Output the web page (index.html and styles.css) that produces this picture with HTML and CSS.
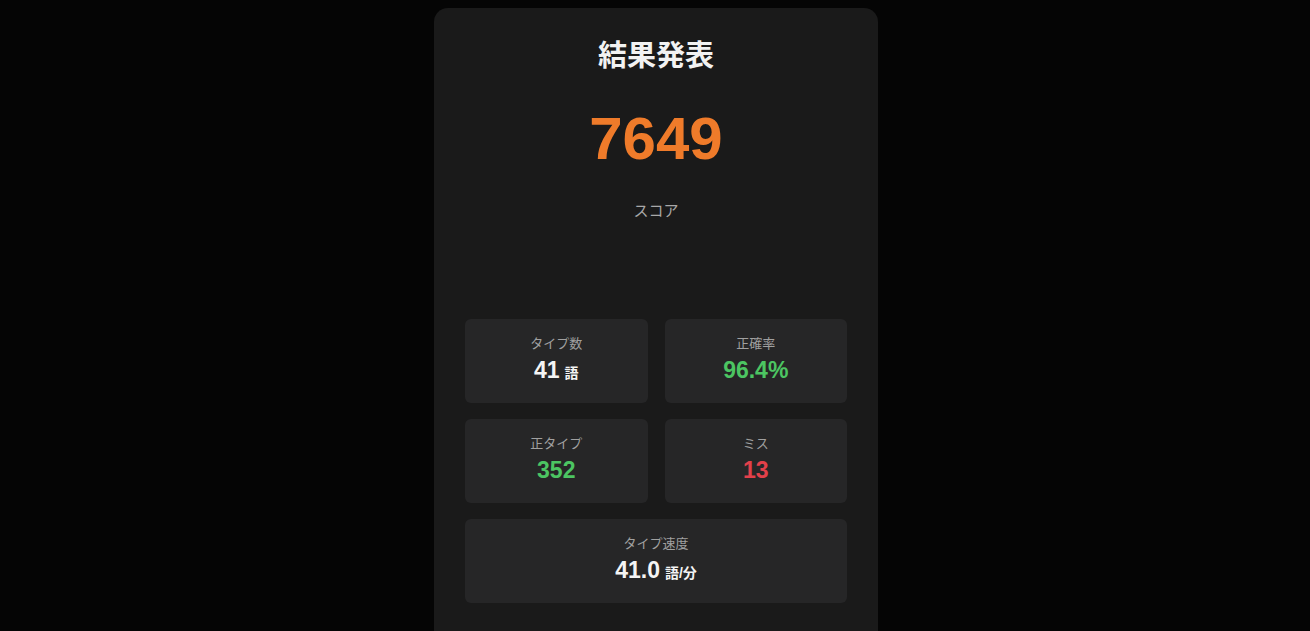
FILE: index.html
```html
<!DOCTYPE html>
<html lang="ja">
<head>
<meta charset="utf-8">
<title>結果発表</title>
<link rel="stylesheet" href="styles.css">
</head>
<body>
<main class="card">
  <h1 class="title">結果発表</h1>
  <div class="score">7649</div>
  <div class="score-label">スコア</div>
  <div class="stats">
    <div class="stat">
      <div class="stat-label">タイプ数</div>
      <div class="stat-value">41<span class="unit">語</span></div>
    </div>
    <div class="stat">
      <div class="stat-label">正確率</div>
      <div class="stat-value green">96.4%</div>
    </div>
    <div class="stat">
      <div class="stat-label">正タイプ</div>
      <div class="stat-value green">352</div>
    </div>
    <div class="stat">
      <div class="stat-label">ミス</div>
      <div class="stat-value red">13</div>
    </div>
    <div class="stat wide">
      <div class="stat-label">タイプ速度</div>
      <div class="stat-value">41.0<span class="unit">語/分</span></div>
    </div>
  </div>
</main>
</body>
</html>
```

FILE: styles.css
```css
html, body {
  margin: 0;
  padding: 0;
  height: 100%;
  background: #050505;
  overflow: hidden;
}
body {
  font-family: "Liberation Sans", Arial, "Noto Sans CJK JP", sans-serif;
  color: #f0f0f0;
  padding-top: 8px;
  box-sizing: border-box;
}
.card {
  width: 444px;
  height: 100%;
  box-sizing: border-box;
  margin: 0 0 0 calc(50% - 221px);
  padding: 28px 31px 0;
  background: #1a1a1a;
  border-radius: 14px 14px 0 0;
  text-align: center;
}
.title {
  margin: 0;
  font-size: 29px;
  line-height: 40px;
  font-weight: 700;
  color: #f2f2f2;
  font-family: "Liberation Sans", "Noto Sans CJK JP", sans-serif;
}
.score {
  margin-top: 28px;
  font-size: 60px;
  line-height: 70px;
  font-weight: 700;
  color: #ef7b2a;
}
.score-label {
  margin-top: 27px;
  font-size: 15px;
  line-height: 20px;
  color: #a8a8a8;
}
.stats {
  margin-top: 98px;
  display: grid;
  grid-template-columns: 1fr 1fr;
  column-gap: 17px;
  row-gap: 16px;
}
.stat {
  background: #262627;
  border-radius: 6px;
  padding: 16px 8px 0;
  height: 84px;
  box-sizing: border-box;
}
.stat.wide {
  grid-column: 1 / span 2;
}
.stat-label {
  font-size: 13px;
  line-height: 18px;
  color: #a0a0a0;
}
.stat-value {
  margin-top: 3px;
  font-size: 23px;
  line-height: 28px;
  font-weight: 700;
  color: #f4f4f4;
}
.unit {
  font-size: 14px;
  margin-left: 5px;
}
.green { color: #4cc562; }
.red { color: #e2404a; }
```
